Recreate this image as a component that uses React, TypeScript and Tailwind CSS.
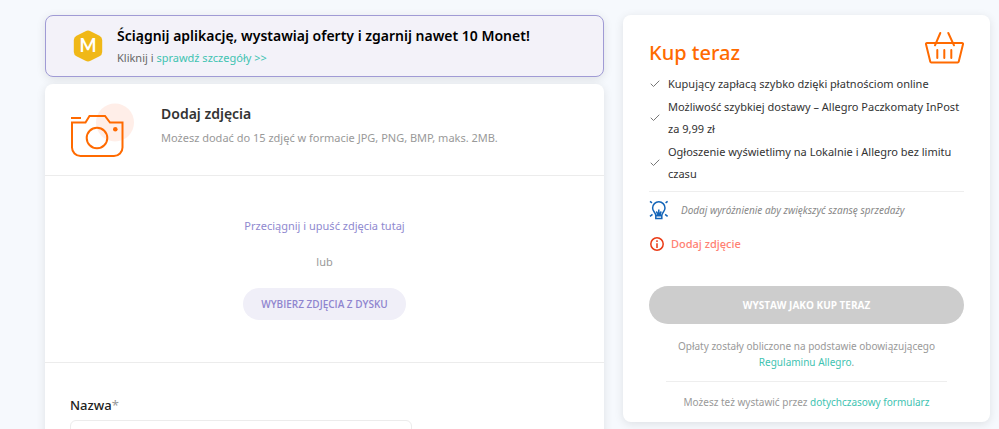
import { Check } from 'lucide-react';

const benefits = [
  'Kupujący zapłacą szybko dzięki płatnościom online',
  'Możliwość szybkiej dostawy – Allegro Paczkomaty InPost za 9,99 zł',
  'Ogłoszenie wyświetlimy na Lokalnie i Allegro bez limitu czasu',
];

function CoinIcon() {
  return (
    <svg className="h-8 w-8 shrink-0" viewBox="0 0 32 32" aria-hidden="true">
      <path
        d="M13.5 1.2a5 5 0 0 1 5 0l9 4.6a5 5 0 0 1 2.7 4.3v11.8a5 5 0 0 1-2.7 4.3l-9 4.6a5 5 0 0 1-5 0l-9-4.6a5 5 0 0 1-2.7-4.3V10.1a5 5 0 0 1 2.7-4.3z"
        fill="#f0b817"
      />
      <text x="16" y="22" textAnchor="middle" fontFamily="Lato, sans-serif" fontWeight="700" fontSize="18" fill="#fff">
        M
      </text>
    </svg>
  );
}

function CameraIcon() {
  return (
    <svg className="h-14 w-16 shrink-0" viewBox="0 0 64 56" fill="none" aria-hidden="true">
      <circle cx="45" cy="20.5" r="19" fill="#ffeee8" />
      <g stroke="#ff6a00" strokeWidth="2">
        <path d="M1 16h10" />
        <path d="M2 20.5h13.5l4-6.5H35l5 6.5h12.5v25A8.5 8.5 0 0 1 44 54H10.5A8.5 8.5 0 0 1 2 45.5z" />
        <circle cx="27" cy="36" r="10.3" />
      </g>
      <circle cx="45.3" cy="27.3" r="2.3" fill="#ff6a00" />
    </svg>
  );
}

function BasketIcon() {
  return (
    <svg
      className="h-9 w-10 shrink-0"
      viewBox="0 0 40 36"
      fill="none"
      stroke="#ff6a00"
      strokeWidth="2"
      strokeLinecap="round"
      strokeLinejoin="round"
      aria-hidden="true"
    >
      <path d="M3 12h35a1 1 0 0 1 1 1.3l-4.3 17.5a1 1 0 0 1-1 .7H7.3a1 1 0 0 1-1-.7L2 13.3A1 1 0 0 1 3 12z" />
      <path d="M16.3 2L11 14.3M24.3 2L30 14.3M13.3 19v8M20.3 19v8M27.3 19v8" />
    </svg>
  );
}

function BulbIcon() {
  return (
    <svg
      className="h-5 w-5 shrink-0"
      viewBox="0 0 20 20"
      fill="none"
      stroke="#1465b8"
      strokeWidth="1.5"
      aria-hidden="true"
    >
      <path d="M6.8 15.8c0-3.3-3.2-4.300-3.200-7.800a6.200 6.200 0 0 1 12.400 0c0 3.500-3.200 4.500-3.200 7.800v2.700h-6v-2.700h6" />
      <path d="M7.300 11.500l1 1.500v2.500M9.800 9.500v6M12.300 11.500l-1 1.500v2.500M1 1.300l2 1.600M18.600 1.300l-2 1.600M1 16.300l2.500-2M18.600 16.300l-2.500-2" />
    </svg>
  );
}

function AlertIcon() {
  return (
    <svg className="h-4 w-4 shrink-0" viewBox="0 0 16 16" fill="none" stroke="#ea3a15" strokeWidth="1.5" aria-hidden="true">
      <circle cx="8" cy="8" r="6.2" />
      <path d="M8 7.3V12M8 4.3v1.7" />
    </svg>
  );
}

function AppBanner() {
  return (
    <section className="flex items-center gap-[13px] rounded-lg border border-[#a09bd5] bg-[#f3f2f9] py-2 pr-6 pl-[26px] shadow-[0_2px_10px_rgba(0,0,0,0.1)]">
      <CoinIcon />
      <div>
        <h2 className="text-sm leading-6 font-semibold text-black">
          Ściągnij aplikację, wystawiaj oferty i zgarnij nawet 10 Monet!
        </h2>
        <p className="text-[11px] leading-5 text-[#666]">
          Kliknij i{' '}
          <a href="#" className="text-[#41c3b1]">
            sprawdź szczegóły &gt;&gt;
          </a>
        </p>
      </div>
    </section>
  );
}

function OfferForm() {
  return (
    <form className="mt-[7px] rounded-t-lg bg-white pb-10 shadow-[0_2px_10px_rgba(0,0,0,0.1)]">
      <header className="flex items-start gap-[27px] border-b border-[#ececec] px-[25px] pt-[18px] pb-[17px]">
        <CameraIcon />
        <div>
          <h2 className="text-sm leading-6 font-semibold text-[#333]">Dodaj zdjęcia</h2>
          <p className="text-[11px] leading-6 text-[#999]">
            Możesz dodać do 15 zdjęć w formacie JPG, PNG, BMP, maks. 2MB.
          </p>
        </div>
      </header>

      <div className="flex flex-col items-center border-b border-[#ececec] pt-10 pb-[42px] text-[11px] leading-5">
        <p className="text-[#8f89cf]">Przeciągnij i upuść zdjęcia tutaj</p>
        <p className="my-4 text-[#999]">lub</p>
        <button
          type="button"
          className="h-8 rounded-full bg-[#f0eff8] px-[18px] font-['Open_Sans',sans-serif] text-[10px] font-semibold text-[#8f85cf]"
        >
          WYBIERZ ZDJĘCIA Z DYSKU
        </button>
      </div>

      <div className="px-[25px] pt-8">
        <label htmlFor="name" className="block text-[13px] leading-5 font-medium text-[#222]">
          Nazwa<span className="font-normal text-[#999]">*</span>
        </label>
        <input id="name" type="text" className="mt-[5px] block h-9 w-[342px] rounded-md border border-[#ececec] px-3 text-[11px]" />
      </div>
    </form>
  );
}

function BuyNowCard() {
  return (
    <aside className="w-[367px] shrink-0 rounded-lg bg-white px-[26px] pt-4 pb-[10px] shadow-[0_2px_10px_rgba(0,0,0,0.1)]">
      <div className="flex items-start justify-between">
        <h1 className="pt-[6px] text-xl leading-8 font-medium text-[#ff6a00]">Kup teraz</h1>
        <BasketIcon />
      </div>

      <ul className="mt-1 flex flex-col gap-px border-b border-[#eee] pb-[6px] text-[11px] leading-[22px] text-[#333]">
        {benefits.map((text) => (
          <li key={text} className="flex items-center gap-[7px]">
            <Check className="h-3 w-3 shrink-0 text-[#777]" strokeWidth={2} />
            <span>{text}</span>
          </li>
        ))}
      </ul>

      <p className="mt-2 flex items-center gap-3 text-[10px] leading-5 text-[#888] italic">
        <BulbIcon />
        Dodaj wyróżnienie aby zwiększyć szansę sprzedaży
      </p>
      <p className="mt-4 flex items-center gap-[6px] text-[11px] leading-4 font-medium text-[#ff8173]">
        <AlertIcon />
        Dodaj zdjęcie
      </p>

      <button
        type="button"
        className="mt-[34px] h-[38px] w-full rounded-full bg-[#cdcdcd] font-['Open_Sans',sans-serif] text-[10px] font-bold text-white"
      >
        WYSTAW JAKO KUP TERAZ
      </button>

      <p className="mt-[14px] text-center text-[10px] leading-4 text-[#999]">
        Opłaty zostały obliczone na podstawie obowiązującego
        <br />
        <a href="#" className="text-[#41c3b1]">
          Regulaminu Allegro
        </a>
        .
      </p>
      <hr className="mx-[17px] mt-[11px] mb-[10px] border-[#eee]" />
      <p className="text-center text-[10px] leading-5 text-[#999]">
        Możesz też wystawić przez{' '}
        <a href="#" className="text-[#41c3b1]">
          dotychczasowy formularz
        </a>
      </p>
    </aside>
  );
}

export default function App() {
  return (
    <main className="flex min-h-screen items-start gap-[19px] bg-[#f6f9fd] pt-[15px] pr-[9px] pl-[45px] font-['Noto_Sans',sans-serif]">
      <div className="min-w-0 flex-1">
        <AppBanner />
        <OfferForm />
      </div>
      <BuyNowCard />
    </main>
  );
}
